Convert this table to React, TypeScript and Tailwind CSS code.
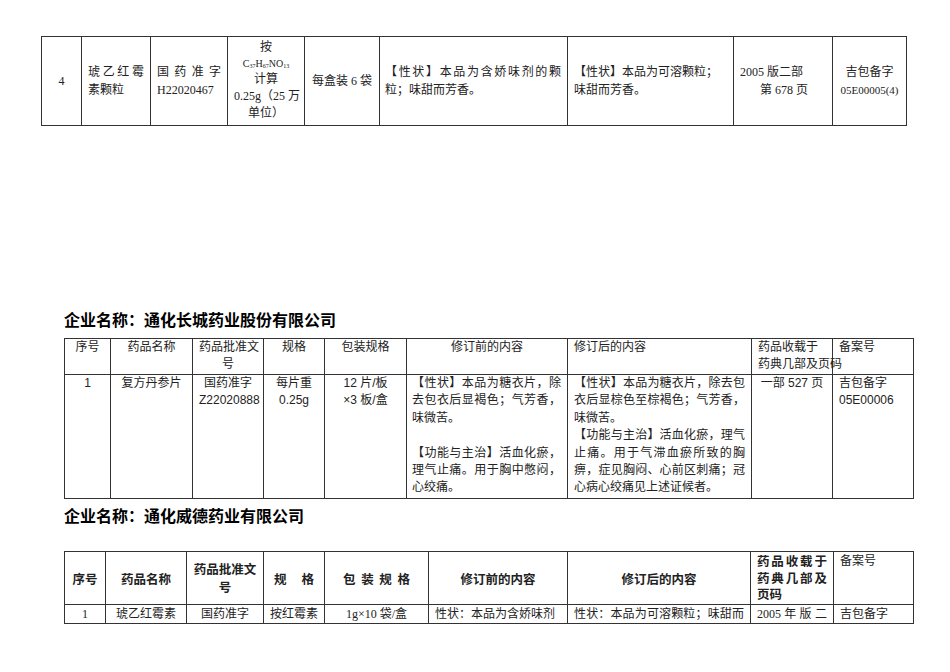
const cell = "border border-[#333] px-[6px] align-middle whitespace-nowrap";

function J({ children, className = "" }: { children: React.ReactNode; className?: string }) {
  // one full line, stretched edge to edge like Word's distributed text
  return <div className={"text-justify [text-align-last:justify] " + className}>{children}</div>;
}

function Heading({ children, className = "" }: { children: React.ReactNode; className?: string }) {
  return (
    <h2 className={"ml-[64px] text-[16px] leading-[20px] font-bold text-black font-['Noto_Sans_CJK_SC',sans-serif] " + className}>
      {children}
    </h2>
  );
}

function FirstTable() {
  const widths = [40, 69, 77, 77, 75, 188, 166, 99, 74];
  return (
    <table className="ml-[41px] w-[865px] table-fixed border-collapse text-[12px] leading-[18px] text-[#222] font-['Liberation_Serif','Noto_Sans_CJK_SC',serif]">
      <colgroup>
        {widths.map((w, i) => (
          <col key={i} style={{ width: w }} />
        ))}
      </colgroup>
      <tbody>
        <tr className="h-[89px]">
          <td className={cell + " text-center"}>4</td>
          <td className={cell}>
            <J>琥乙红霉</J>
            <div>素颗粒</div>
          </td>
          <td className={cell}>
            <J>国药准字</J>
            <div>H22020467</div>
          </td>
          <td className={cell + " text-center px-0 leading-[17.4px]"}>
            <div>按</div>
            <div className="leading-[14px] text-[10px]">
              C<sub className="text-[6px]">37</sub>H<sub className="text-[6px]">67</sub>NO<sub className="text-[6px]">13</sub>
            </div>
            <div>计算</div>
            <div>0.25g（25 万</div>
            <div>单位）</div>
          </td>
          <td className={cell + " text-center"}>每盒装 6 袋</td>
          <td className={cell + " pl-[5px]"}>
            <J>【性状】本品为含娇味剂的颗</J>
            <div>粒；味甜而芳香。</div>
          </td>
          <td className={cell}>
            <div>【性状】本品为可溶颗粒；</div>
            <div>味甜而芳香。</div>
          </td>
          <td className={cell}>
            <div>2005 版二部</div>
            <div className="pl-[20px]">第 678 页</div>
          </td>
          <td className={cell + " text-center px-0"}>
            <div>吉包备字</div>
            <div className="text-[11px]">05E00005(4)</div>
          </td>
        </tr>
      </tbody>
    </table>
  );
}

function SecondTable() {
  const widths = [46, 82, 71, 61, 82, 161, 184, 81, 81];
  const c = "border border-[#333] px-[6px] align-top whitespace-nowrap";
  return (
    <table className="ml-[64px] w-[849px] table-fixed border-collapse text-[12px] leading-[17.4px] text-[#222] font-['Liberation_Sans','Noto_Sans_CJK_SC',sans-serif]">
      <colgroup>
        {widths.map((w, i) => (
          <col key={i} style={{ width: w }} />
        ))}
      </colgroup>
      <thead>
        <tr className="h-[36px]">
          <th className={c + " font-normal text-center"}>序号</th>
          <th className={c + " font-normal text-center"}>药品名称</th>
          <th className={c + " font-normal text-center px-[2px]"}>
            药品批准文
            <br />号
          </th>
          <th className={c + " font-normal text-center"}>规格</th>
          <th className={c + " font-normal text-center"}>包装规格</th>
          <th className={c + " font-normal text-center"}>修订前的内容</th>
          <th className={c + " font-normal text-left"}>修订后的内容</th>
          <th className={c + " font-normal text-left"}>
            药品收载于
            <br />
            药典几部及页码
          </th>
          <th className={c + " font-normal text-left"}>备案号</th>
        </tr>
      </thead>
      <tbody>
        <tr className="h-[124px]">
          <td className={c + " text-center"}>1</td>
          <td className={c + " text-center"}>复方丹参片</td>
          <td className={c + " text-center px-[2px]"}>
            国药准字
            <br />
            Z22020888
          </td>
          <td className={c + " text-center"}>
            每片重
            <br />
            0.25g
          </td>
          <td className={c + " text-center"}>
            12 片/板
            <br />
            ×3 板/盒
          </td>
          <td className={c + " pl-[5px]"}>
            <J>【性状】本品为糖衣片，除</J>
            <J>去包衣后显褐色；气芳香，</J>
            <div>味微苦。</div>
            <div>&nbsp;</div>
            <J>【功能与主治】活血化瘀，</J>
            <J>理气止痛。用于胸中憋闷，</J>
            <div>心绞痛。</div>
          </td>
          <td className={c}>
            <J>【性状】本品为糖衣片，除去包</J>
            <J>衣后显棕色至棕褐色；气芳香，</J>
            <div>味微苦。</div>
            <J>【功能与主治】活血化瘀，理气</J>
            <J>止痛。用于气滞血瘀所致的胸</J>
            <J>痹，症见胸闷、心前区刺痛；冠</J>
            <div>心病心绞痛见上述证候者。</div>
          </td>
          <td className={c + " text-center"}>一部 527 页</td>
          <td className={c}>
            吉包备字
            <br />
            05E00006
          </td>
        </tr>
      </tbody>
    </table>
  );
}

function ThirdTable() {
  const widths = [41, 81, 77, 61, 104, 139, 183, 83, 80];
  const h = "border border-[#333] px-[6px] align-middle whitespace-nowrap font-bold text-[12.5px] font-['Noto_Sans_CJK_SC',sans-serif]";
  const c = "border border-[#333] px-[6px] align-middle whitespace-nowrap overflow-hidden";
  return (
    <table className="ml-[64px] w-[849px] table-fixed border-collapse text-[12px] leading-[17px] text-[#222] font-['Liberation_Serif','Noto_Sans_CJK_SC',serif]">
      <colgroup>
        {widths.map((w, i) => (
          <col key={i} style={{ width: w }} />
        ))}
      </colgroup>
      <thead>
        <tr className="h-[53px]">
          <th className={h + " text-center"}>序号</th>
          <th className={h + " text-center"}>药品名称</th>
          <th className={h + " text-center leading-[18px] px-[2px]"}>
            药品批准文
            <br />号
          </th>
          <th className={h + " px-[10px]"}>
            <J>规格</J>
          </th>
          <th className={h + " px-[18px]"}>
            <J>包装规格</J>
          </th>
          <th className={h + " text-center"}>修订前的内容</th>
          <th className={h + " text-center"}>修订后的内容</th>
          <th className={h + " align-top pt-[1px] leading-[16.5px]"}>
            <J>药品收载于</J>
            <J>药典几部及</J>
            <div className="text-left">页码</div>
          </th>
          <th className={c + " align-top text-left font-normal pt-[1px]"}>备案号</th>
        </tr>
      </thead>
      <tbody>
        <tr className="h-[19px]">
          <td className={c + " text-center"}>1</td>
          <td className={c + " text-center"}>琥乙红霉素</td>
          <td className={c + " text-center"}>国药准字</td>
          <td className={c + " text-center px-[2px]"}>按红霉素</td>
          <td className={c + " text-center"}>1g×10 袋/盒</td>
          <td className={c}>性状：本品为含娇味剂</td>
          <td className={c + " px-[4px]"}>
            <J>性状：本品为可溶颗粒；味甜而</J>
          </td>
          <td className={c}>
            <J>2005 年 版 二</J>
          </td>
          <td className={c}>吉包备字</td>
        </tr>
      </tbody>
    </table>
  );
}

export default function App() {
  return (
    <div className="w-[950px] h-[672px] overflow-hidden bg-white pt-[36px]">
      <FirstTable />
      <Heading className="mt-[183px]">企业名称：通化长城药业股份有限公司</Heading>
      <div className="mt-[9px]">
        <SecondTable />
      </div>
      <Heading className="mt-[6px]">企业名称：通化威德药业有限公司</Heading>
      <div className="mt-[26px]">
        <ThirdTable />
      </div>
    </div>
  );
}
